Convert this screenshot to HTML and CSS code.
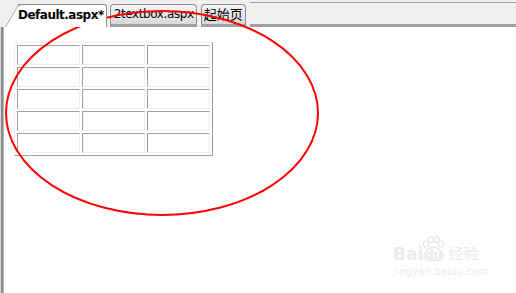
FILE: index.html
```html
<!DOCTYPE html>
<html lang="en">
<head>
    <meta charset="UTF-8">
    <meta name="viewport" content="width=device-width, initial-scale=1.0">
    <title>Default.aspx</title>
    <link rel="stylesheet" href="styles.css">
</head>
<body>
    <div class="tabstrip">
        <div class="tab active">Default.aspx*</div>
        <div class="tab">2textbox.aspx</div>
        <div class="tab cjk">起始页</div>
        <div class="filler"></div>
    </div>

    <div class="editor">
        <table class="grid">
            <tr><td></td><td></td><td></td></tr>
            <tr><td></td><td></td><td></td></tr>
            <tr><td></td><td></td><td></td></tr>
            <tr><td></td><td></td><td></td></tr>
            <tr><td></td><td></td><td></td></tr>
        </table>
    </div>

    <!-- red mark drawn over the page -->
    <svg class="mark" width="516" height="293" viewBox="0 0 516 293">
        <ellipse cx="162" cy="113" rx="156" ry="102" fill="none" stroke="#f00" stroke-width="2"/>
    </svg>

    <div class="watermark">
        <div class="wm-logo">
            <span>Bai</span>
            <svg class="paw" width="24" height="26" viewBox="0 0 24 26">
                <g fill="none" stroke="#e8e8e8" stroke-width="1.3">
                    <ellipse cx="5" cy="8" rx="2.6" ry="3.2"/>
                    <ellipse cx="10" cy="3.5" rx="2.6" ry="3"/>
                    <ellipse cx="15.5" cy="3.5" rx="2.6" ry="3"/>
                    <ellipse cx="20" cy="8" rx="2.6" ry="3.2"/>
                    <path d="M12.5 11 C8 11 3 17 3 21 C3 24 6 25 12.5 24 C19 25 22 24 22 21 C22 17 17 11 12.5 11 Z"/>
                </g>
            </svg>
            <span class="du">du</span>
            <span class="jy">经验</span>
        </div>
        <div class="wm-url">jingyan.baidu.com</div>
    </div>
</body>
</html>
```

FILE: styles.css
```css
body {
    margin: 0;
    width: 516px;
    height: 293px;
    overflow: hidden;
    background: #fff;
    font-family: "DejaVu Sans", Tahoma, sans-serif;
}
.tabstrip {
    display: flex;
    align-items: flex-end;
    height: 27px;
    padding-left: 18px;
    background: #f0f0f0;
    box-sizing: border-box;
}
.tab {
    height: 19px;
    margin-right: 4px;
    padding: 0 2px 0 3px;
    font-size: 12px;
    letter-spacing: -0.4px;
    line-height: 18px;
    color: #000;
    background: linear-gradient(#f6f6f6, #d8d8d8);
    border: 1px solid #8c8c8c;
    border-bottom: 3px solid #a0a0a0;
    border-radius: 4px 4px 0 0;
}
.tab.cjk {
    font-family: "Noto Sans CJK SC", sans-serif;
    font-size: 13px;
    letter-spacing: 0;
    line-height: 17px;
    padding: 0 2px;
}
.tab.active {
    position: relative;
    height: 22px;
    margin-right: 3px;
    padding: 0 2px 0 0;
    font-weight: bold;
    letter-spacing: -0.5px;
    line-height: 21px;
    background: #fff;
    border: 1px solid #8c8c8c;
    border-left: none;
    border-bottom: none;
    border-radius: 0 3px 0 0;
    z-index: 1;
}
.tab.active::before {
    content: "";
    position: absolute;
    left: -13px;
    top: -1px;
    bottom: 0;
    width: 14px;
    background: #fff;
    border-left: 1px solid #8c8c8c;
    border-top: 1px solid #8c8c8c;
    border-radius: 4px 0 0 0;
    transform: skewX(-30deg);
    transform-origin: bottom left;
    z-index: -1;
}
.filler {
    flex: 1;
    height: 21px;
    border-top: 1px solid #a0a0a0;
    border-bottom: 3px solid #a0a0a0;
    box-shadow: inset 0 -1px #ececec;
}
.editor {
    height: 266px;
    margin-left: 1px;
    padding: 15px 0 0 11px;
    box-sizing: border-box;
    border-left: 2px solid #8a8a8a;
    box-shadow: inset 1px 0 #b8b8b8, -1px 0 #d8d8d8;
}
.grid {
    border-collapse: separate;
    border-spacing: 2px;
    border: 1px solid;
    border-color: #eeeeee #a0a0a0 #a0a0a0 #eeeeee;
}
.grid td {
    width: 61px;
    height: 18px;
    padding: 0;
    border: 1px solid;
    border-color: #a0a0a0 #eeeeee #eeeeee #a0a0a0;
}
.mark {
    position: absolute;
    left: 0;
    top: 0;
    pointer-events: none;
}
.watermark {
    position: absolute;
    left: 393px;
    top: 236px;
    color: #ebebeb;
    font-family: "DejaVu Sans", sans-serif;
}
.wm-logo {
    display: flex;
    align-items: flex-end;
    font-size: 17px;
    font-weight: bold;
    height: 28px;
}
.wm-logo .paw {
    margin: 0 0 2px -2px;
}
.wm-logo .du {
    font-size: 12px;
    margin-left: -20px;
    margin-right: 6px;
    margin-bottom: 2px;
}
.wm-logo .jy {
    font-family: "Noto Sans CJK SC", sans-serif;
    font-size: 15px;
    font-weight: normal;
    line-height: 22px;
}
.wm-url {
    font-size: 10px;
    letter-spacing: 0.2px;
    margin-top: 2px;
}
```
